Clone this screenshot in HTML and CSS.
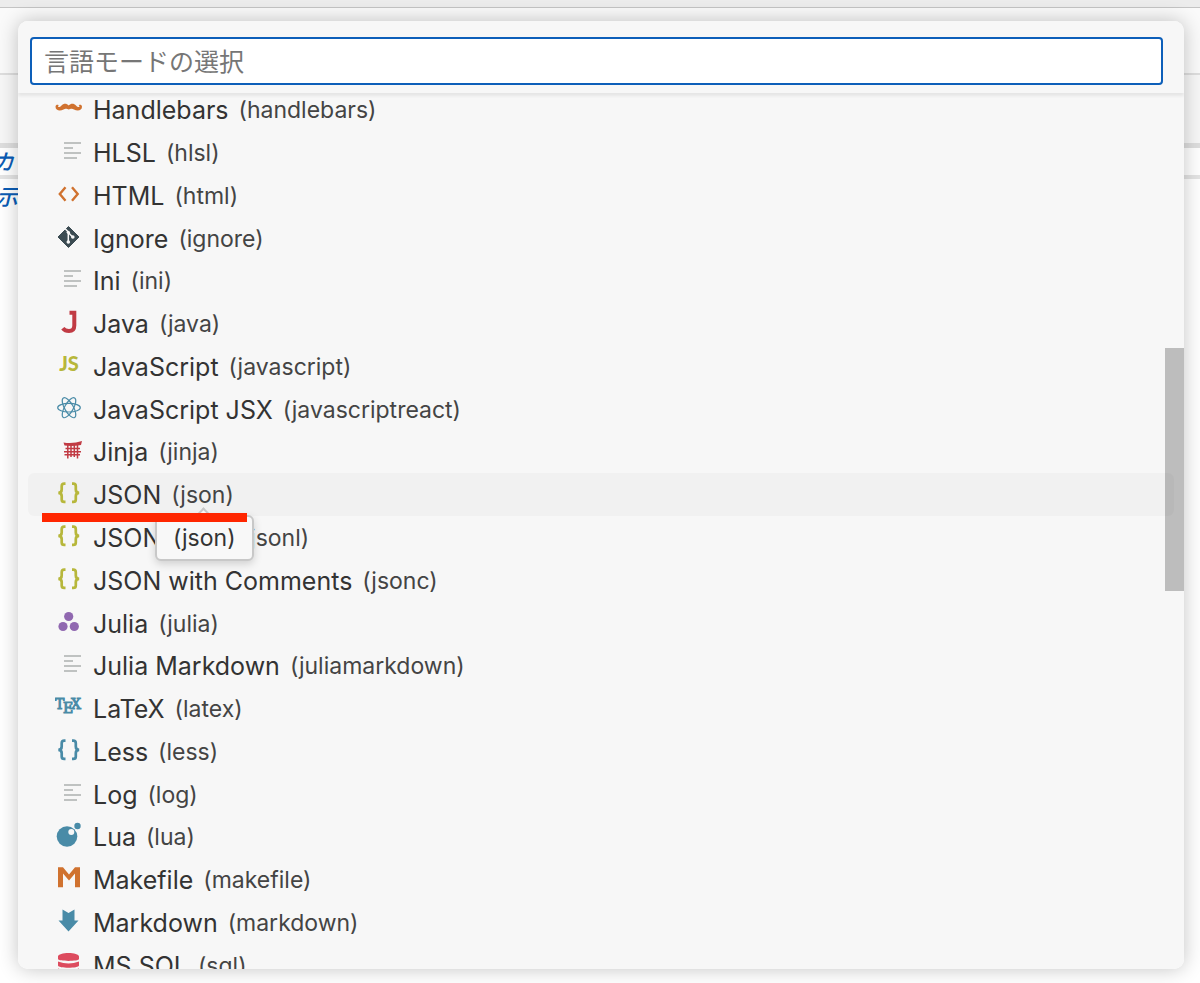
FILE: index.html
```
<!DOCTYPE html>
<html lang="ja">
<head>
<meta charset="utf-8">
<meta name="viewport" content="width=device-width, initial-scale=1">
<title>言語モードの選択</title>
<link rel="stylesheet" href="styles.css">
</head>
<body>
<svg class="sprite" aria-hidden="true">
  <symbol id="lines" viewBox="0 0 28 28"><path d="M9 5h17M9 10h9M9 15h17M9 20h13" fill="none" stroke="currentColor" stroke-width="1.8"/></symbol>
  <symbol id="braces" viewBox="0 0 28 28"><path d="M10.5 3.7H9.2Q6.7 3.7 6.7 6.2V9.500Q6.700 12.800 3.300 12.800Q6.700 12.800 6.700 16V19.400Q6.700 21.900 9.200 21.900H10.500M17 3.700H18.300Q20.800 3.700 20.800 6.200V9.500Q20.800 12.800 24.200 12.800Q20.800 12.800 20.800 16V19.400Q20.800 21.900 18.300 21.900H17" fill="none" stroke="currentColor" stroke-width="2.7"/></symbol>
</svg>

<div class="page" aria-hidden="true">
  <div class="titlebar"></div>
  <div class="band band-tabs"></div>
  <div class="band band-tools"></div>
  <div class="band band-path"><span class="peek">カ</span></div>
  <div class="peek">示</div>
</div>

<main class="picker">
  <div class="picker-head">
    <input class="search" type="text" aria-label="言語モードの選択" placeholder="言語モードの選択">
  </div>
  <div class="picker-body">
    <ul class="list" role="listbox" aria-label="言語">
      <li class="row" role="option"><svg class="icon orange" viewBox="0 0 28 28"><path d="M13.700 10.500C16 8 19 8.200 21 10.500C22.500 12.200 24.300 12.600 24.600 11.300C24.700 10.600 24 10.600 23.800 11C23.500 9.500 26.800 9 27 11.800C27 16 22 16.300 19 14.500C16.500 13 15 14.500 13.700 14.500C12.400 14.500 11 13 8.500 14.500C5.500 16.300 .5 16 .5 11.800C.7 9 4 9.500 3.700 11C3.500 10.600 2.800 10.600 2.900 11.300C3.200 12.600 5 12.200 6.500 10.500C8.500 8.200 11.500 8 13.700 10.500Z" fill="currentColor"/></svg><span class="name">Handlebars</span><span class="id">(handlebars)</span></li>
      <li class="row" role="option"><svg class="icon gray"><use href="#lines"/></svg><span class="name">HLSL</span><span class="id">(hlsl)</span></li>
      <li class="row" role="option"><svg class="icon orange" viewBox="0 0 28 28"><path d="M10.500 6.200L4.800 13L10.500 19.800M17 6.200L22.700 13L17 19.800" fill="none" stroke="currentColor" stroke-width="2.400"/></svg><span class="name">HTML</span><span class="id">(html)</span></li>
      <li class="row" role="option"><svg class="icon slate" viewBox="0 0 28 28"><path d="M13.500 2.500L24 13L13.500 23.500L3 13Z" fill="currentColor" stroke="currentColor" stroke-linejoin="round"/><path d="M10 4.500L13.300 8V18.500M13.300 8.500L17.500 13" fill="none" stroke="#f7f7f7" stroke-width="1.500"/><circle cx="13.300" cy="8.300" r="1.600" fill="#f7f7f7"/><circle cx="13.300" cy="18" r="1.800" fill="#f7f7f7"/><circle cx="17.800" cy="13" r="1.800" fill="#f7f7f7"/></svg><span class="name">Ignore</span><span class="id">(ignore)</span></li>
      <li class="row" role="option"><svg class="icon gray"><use href="#lines"/></svg><span class="name">Ini</span><span class="id">(ini)</span></li>
      <li class="row" role="option"><svg class="icon red" viewBox="0 0 28 28"><path d="M14.500 3.800H19.300V16.500Q19.300 22 14 22Q10 22 7.800 19.200" fill="none" stroke="currentColor" stroke-width="4"/></svg><span class="name">Java</span><span class="id">(java)</span></li>
      <li class="row" role="option"><svg class="icon yellow" viewBox="0 0 28 28"><text class="js" x="14" y="19" text-anchor="middle">JS</text></svg><span class="name">JavaScript</span><span class="id">(javascript)</span></li>
      <li class="row" role="option"><svg class="icon blue" viewBox="0 0 28 28"><g fill="none" stroke="currentColor" stroke-width="1.200"><ellipse cx="14" cy="12.700" rx="11.300" ry="4.300"/><ellipse cx="14" cy="12.700" rx="11.300" ry="4.300" transform="rotate(60 14 12.700)"/><ellipse cx="14" cy="12.700" rx="11.300" ry="4.300" transform="rotate(120 14 12.700)"/></g></svg><span class="name">JavaScript JSX</span><span class="id">(javascriptreact)</span></li>
      <li class="row" role="option"><svg class="icon red" viewBox="0 0 28 28"><path d="M8.500 5.500Q18 7 27 4L26 8Q17.500 9.500 9.500 8.500Z" fill="currentColor"/><path d="M10.500 11.500H25M9 14.700H26M9.500 17.700H25M12.800 8V21.500M22.500 8V21.500M16 8V20M19.300 8V20" fill="none" stroke="currentColor" stroke-width="1.500"/></svg><span class="name">Jinja</span><span class="id">(jinja)</span></li>
      <li class="row active" role="option" aria-selected="true"><svg class="icon yellow"><use href="#braces"/></svg><span class="name">JSON</span><span class="id">(json)</span><span class="tooltip" role="tooltip">(json)</span><span class="marker"></span></li>
      <li class="row" role="option"><svg class="icon yellow"><use href="#braces"/></svg><span class="name">JSON Lines</span><span class="id">(jsonl)</span></li>
      <li class="row" role="option"><svg class="icon yellow"><use href="#braces"/></svg><span class="name">JSON with Comments</span><span class="id">(jsonc)</span></li>
      <li class="row" role="option"><svg class="icon purple" viewBox="0 0 28 28"><g fill="currentColor"><circle cx="13.700" cy="7.500" r="4.600"/><circle cx="8" cy="17.500" r="4.600"/><circle cx="19.300" cy="17.500" r="4.600"/></g></svg><span class="name">Julia</span><span class="id">(julia)</span></li>
      <li class="row" role="option"><svg class="icon gray"><use href="#lines"/></svg><span class="name">Julia Markdown</span><span class="id">(juliamarkdown)</span></li>
      <li class="row" role="option"><svg class="icon blue" viewBox="0 0 28 28"><g class="tex"><text x="0" y="15">T</text><text x="8" y="19">E</text><text x="16" y="15">X</text></g></svg><span class="name">LaTeX</span><span class="id">(latex)</span></li>
      <li class="row" role="option"><svg class="icon blue"><use href="#braces"/></svg><span class="name">Less</span><span class="id">(less)</span></li>
      <li class="row" role="option"><svg class="icon gray"><use href="#lines"/></svg><span class="name">Log</span><span class="id">(log)</span></li>
      <li class="row" role="option"><svg class="icon blue" viewBox="0 0 28 28"><circle cx="12" cy="14.500" r="10.300" fill="currentColor"/><circle cx="22.500" cy="4" r="3.200" fill="currentColor"/><circle cx="16.300" cy="10" r="3" fill="#f7f7f7"/></svg><span class="name">Lua</span><span class="id">(lua)</span></li>
      <li class="row" role="option"><svg class="icon orange" viewBox="0 0 28 28"><path d="M3 2.300H8L14 9.500L20 2.300H25V22.300H20V8.500L14 15.500L8 8.500V22.300H3Z" fill="currentColor"/></svg><span class="name">Makefile</span><span class="id">(makefile)</span></li>
      <li class="row" role="option"><svg class="icon blue" viewBox="0 0 28 28"><path d="M7.500 1.500L13.500 5L19.500 1.500V12.500H23.500L13.500 23.500L3.500 12.500H7.500Z" fill="currentColor"/></svg><span class="name">Markdown</span><span class="id">(markdown)</span></li>
      <li class="row" role="option"><svg class="icon rose" viewBox="0 0 28 28"><path d="M3 5.500C3 .8 24 .8 24 5.500V8C24 10.500 3 10.500 3 8ZM3 10.500Q13.500 14.500 24 10.500V14.500C24 17.500 3 17.500 3 14.500ZM3 17.500Q13.500 21 24 17.500V21C24 25 3 25 3 21Z" fill="currentColor"/></svg><span class="name">MS SQL</span><span class="id">(sql)</span></li>
    </ul>
    <div class="scrollbar"></div>
  </div>
</main>
</body>
</html>
```
FILE: styles.css
```
* { box-sizing: border-box; }

body {
  margin: 0;
  height: 100vh;
  overflow: hidden;
  position: relative;
  background: #fff;
  font-family: Inter, "Noto Sans CJK JP", sans-serif;
  color: #333;
}

.sprite { position: absolute; width: 0; height: 0; }

/* Editor window behind the picker */
.titlebar { height: 8px; background: #ececec; border-bottom: 1px solid #c4c4c4; }
.band-tabs { height: 67px; background: #fafafa; border-bottom: 2px solid #dedede; }
.band-tools { height: 73px; background: #f7f7f7; border-bottom: 5px solid #dedede; }
.band-path { height: 31px; border-bottom: 4px solid #e4e4e4; }
.peek {
  display: block;
  margin-left: -8px;
  font: italic 500 22px/24px "Noto Sans CJK JP", sans-serif;
  color: #0a5cb5;
}
.band + .peek { margin: 4px 0 0 -4px; }

/* Picker */
.picker {
  position: absolute;
  inset: 21px 16px 14px 18px;
  display: flex;
  flex-direction: column;
  overflow: hidden;
  border-radius: 10px;
  background: #f7f7f7;
}
.page::after {
  content: "";
  position: absolute;
  inset: 21px 16px 14px 18px;
  border-radius: 10px;
  box-shadow: 0 0 20px rgba(0, 0, 0, .24);
}
.picker-head {
  position: relative;
  z-index: 1;
  padding: 16px 21px 8px 12px;
  background: #f7f7f7;
  box-shadow: 0 3px 3px rgba(0, 0, 0, .07);
}
.search {
  display: block;
  width: 100%;
  height: 48px;
  padding: 0 12px 2px;
  border: 2px solid #0d5fb9;
  border-radius: 4px;
  outline: none;
  background: #fff;
  color: #333;
  font: 25px/36px "Noto Sans CJK JP", sans-serif;
}
.search::placeholder { color: #767676; opacity: 1; }

.picker-body { position: relative; flex: 1; min-height: 0; overflow: hidden; }
.list {
  display: grid;
  grid-auto-rows: 1fr;
  height: 898px;
  margin: -5px 10px 0;
  padding: 0;
  list-style: none;
}
.row {
  display: flex;
  align-items: center;
  padding-left: 27px;
  border-radius: 6px;
  white-space: nowrap;
}
.active { position: relative; z-index: 1; background: rgba(0, 0, 0, .025); }
.icon { flex: none; width: 28px; height: 28px; margin-right: 10px; }
.name, .id { padding-top: 2px; line-height: 32px; }
.name { font-size: 25px; }
.id { margin-left: 10px; font-size: 23px; color: #444; }

.orange { color: #d0722f; }
.gray { color: #bfc2c1; }
.slate { color: #3b4b52; }
.red { color: #c13b44; }
.yellow { color: #b7b73b; }
.blue { color: #498ba7; }
.purple { color: #9068b0; }
.rose { color: #dd4b5e; }
.icon text { fill: currentColor; }
.js { font: 900 20px Lato, sans-serif; }
.tex { font: 14px "DejaVu Serif", serif; stroke: currentColor; }

.tooltip {
  position: absolute;
  left: 127px;
  top: 42px;
  padding: 6px 16px;
  border: 2px solid #c8c8c8;
  border-radius: 6px;
  background: #f8f8f8;
  box-shadow: 0 3px 8px rgba(0, 0, 0, .16);
  font-size: 23px;
  line-height: 30px;
}
.tooltip::before {
  content: "";
  position: absolute;
  left: 40px;
  top: -7px;
  width: 11px;
  height: 11px;
  border: solid #c8c8c8;
  border-width: 2px 0 0 2px;
  background: #f8f8f8;
  transform: rotate(45deg);
}
.marker { position: absolute; left: 14px; top: 40px; width: 205px; height: 9px; background: #ff2600; }

.scrollbar {
  position: absolute;
  right: 0;
  top: 255px;
  width: 19px;
  height: 243px;
  background: #bdbdbd;
}
```
